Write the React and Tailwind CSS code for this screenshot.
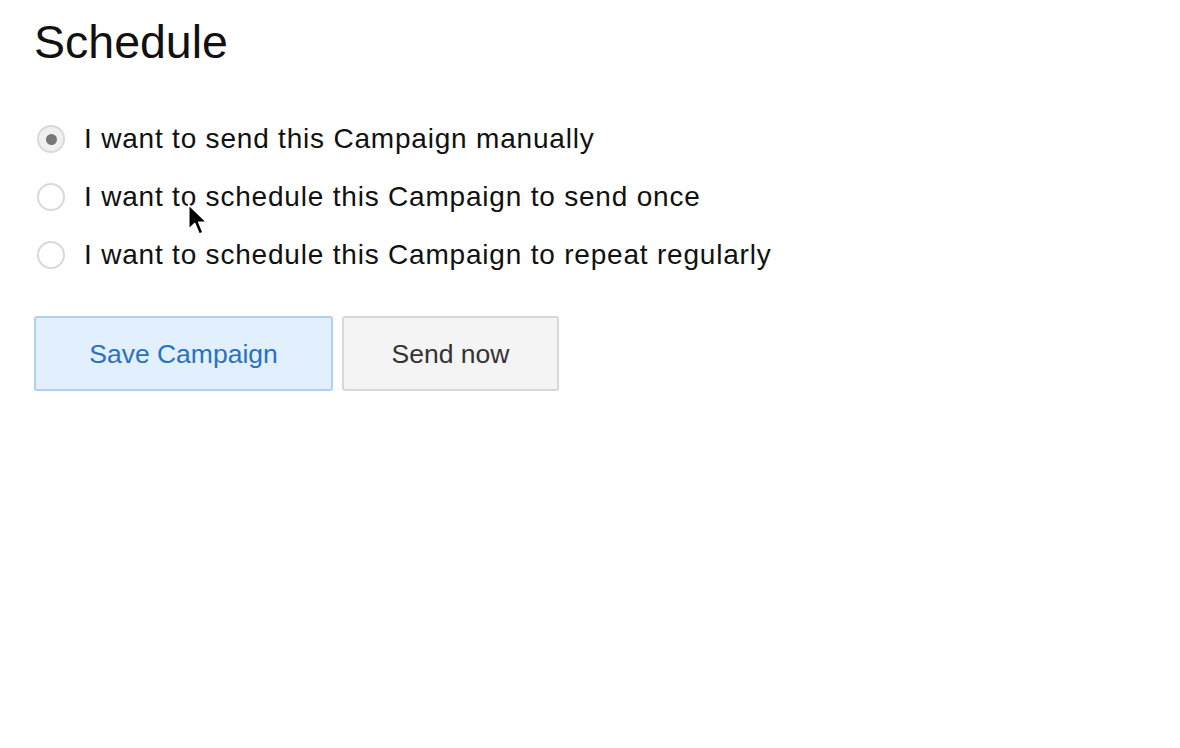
import React from "react";

const options = [
  { label: "I want to send this Campaign manually", checked: true },
  { label: "I want to schedule this Campaign to send once", checked: false },
  { label: "I want to schedule this Campaign to repeat regularly", checked: false },
];

const Radio = ({ checked }) => (
  <span
    className={
      "flex h-[28px] w-[28px] shrink-0 items-center justify-center rounded-full border-2 border-[#d9d9d9] " +
      (checked ? "bg-[#f0f0f0]" : "bg-white")
    }
  >
    {checked && <span className="h-[11px] w-[11px] rounded-full bg-[#777]" />}
  </span>
);

const Cursor = () => (
  <svg
    className="absolute left-[187px] top-[203px]"
    width="22"
    height="35"
    viewBox="0 0 20 32"
  >
    <path
      d="M1.5 1.5 L1.5 24 L7 18.8 L11 28.5 L14.6 27 L10.7 17.6 L18 17.6 Z"
      fill="#000"
      stroke="#fff"
      strokeWidth="1.5"
      strokeLinejoin="round"
    />
  </svg>
);

export default function App() {
  return (
    <div className="relative min-h-[748px] w-full bg-white px-[34px] pt-[19px] font-['Liberation_Sans',sans-serif]">
      <h1 className="text-[46.5px] leading-[46px] text-[#111]">Schedule</h1>

      <div className="mt-[45px] flex flex-col">
        {options.map((o, i) => (
          <label key={i} className="flex h-[58px] items-center gap-[19px] pl-[3px]">
            <Radio checked={o.checked} />
            <span className="text-[28px] tracking-[0.8px] text-[#111]">{o.label}</span>
          </label>
        ))}
      </div>

      <div className="mt-[32px] flex gap-[9px]">
        <button className="h-[75px] w-[299px] rounded-[3px] border-2 border-[#aed0f2] bg-[#e2effd] pt-[2px] text-[26.5px] text-[#2a72c0]">
          Save Campaign
        </button>
        <button className="h-[75px] w-[217px] rounded-[3px] border-2 border-[#d8d8d8] bg-[#f4f4f4] pt-[2px] text-[26.5px] text-[#333]">
          Send now
        </button>
      </div>

      <Cursor />
    </div>
  );
}
